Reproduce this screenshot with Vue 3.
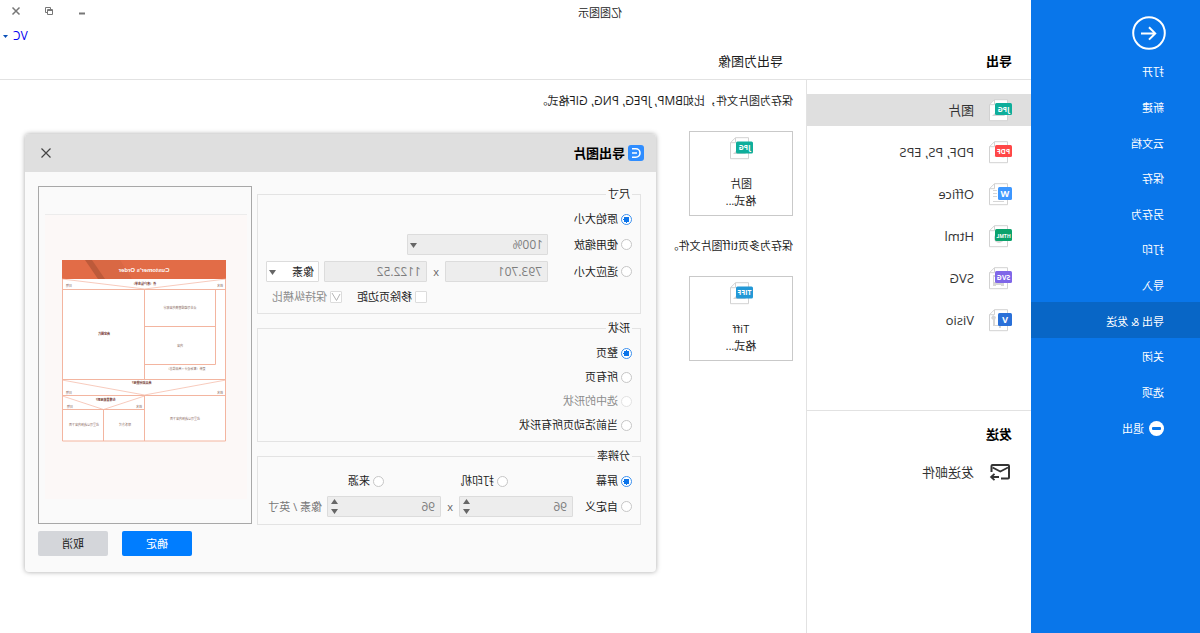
<script setup>
import { ref } from 'vue'

const menu = ['打开', '新建', '云文档', '保存', '另存为', '打印', '导入', '导出 & 发送', '关闭', '选项']
const activeMenu = ref('导出 & 发送')

const formats = [
  { label: '图片', tag: 'JPG', color: '#0fae9b', art: 'photo' },
  { label: 'PDF, PS, EPS', tag: 'PDF', color: '#ff4747', art: 'swirl' },
  { label: 'Office', tag: 'W', color: '#3d97ff', art: 'lines' },
  { label: 'Html', tag: 'HTML', color: '#0ba26c', art: 'globe' },
  { label: 'SVG', tag: 'SVG', color: '#7f67e8', art: 'nodes' },
  { label: 'Visio', tag: 'V', color: '#2a70d8', art: 'flow' }
]
const activeFormat = ref('图片')

const targets = [
  { lead: '保存为图片文件，比如', types: 'BMP, JPEG, PNG, GIF', tail: '格式。', name: '图片', tag: 'JPG', color: '#0fae9b', art: 'photo' },
  { lead: '保存为多页', types: 'tiff', tail: '图片文件。', name: 'Tiff', tag: 'TIFF', color: '#2398d6', art: 'photo' }
]

const artPaths = {
  photo: 'M7 17l4-5 3 3 2-2 4 4z',
  swirl: 'M7 17q5-2 6-7 1 5 7 5-7 0-13 2z',
  lines: 'M15 7h4v1h-4zM15 10h4v1h-4zM15 13h4v1h-4zM8 18h11v1H8z',
  globe: 'M13 8a5 5 0 1 1 0 10 5 5 0 0 1 0-10z',
  nodes: 'M8 15h3v1h5v-1h3v4h-3v-1h-5v1H8zM17 8h2v7h-1V10h-1z',
  flow: 'M16 8l3-2 2 3-2 2v6h-6v2h-2v-4h2v1h4v-5z'
}

const sizeMode = ref('original')
const shapes = [
  { value: 'page', label: '整页' },
  { value: 'all', label: '所有页' },
  { value: 'selected', label: '选中的形状', disabled: true },
  { value: 'active', label: '当前活动页所有形状' }
]
const shapeMode = ref('page')
const sources = [
  { value: 'screen', label: '屏幕' },
  { value: 'printer', label: '打印机' },
  { value: 'source', label: '来源' }
]
const dpiMode = ref('screen')
</script>

<template>
  <div class="window">
    <aside class="sidebar">
      <button class="back" aria-label="返回">
        <svg width="34" height="34" viewBox="0 0 34 34" fill="none" stroke="#fff">
          <circle cx="17" cy="17" r="15.8" stroke-width="2" />
          <path d="M25 17.4H11M17 11.2l-6.2 6.2 6.2 6.2" stroke-width="2" />
        </svg>
      </button>
      <nav class="menu">
        <button
          v-for="item in menu"
          :key="item"
          class="menu-item"
          :class="{ active: item === activeMenu }"
          @click="activeMenu = item"
        >{{ item }}</button>
        <button class="menu-item exit">
          <svg width="15" height="15" viewBox="0 0 15 15">
            <circle cx="7.5" cy="7.5" r="7.5" fill="#fff" />
            <rect x="3" y="6" width="9" height="3" rx="1" fill="#0976ea" />
          </svg>
          退出
        </button>
      </nav>
    </aside>

    <div class="workspace">
      <header class="top">
        <div class="titlebar">
          <span class="app-title">亿图图示</span>
          <div class="controls">
            <button aria-label="最小化">
              <svg width="10" height="10" viewBox="0 0 10 10"><path d="M2 7.5h6" stroke="#777" stroke-width="2" /></svg>
            </button>
            <button aria-label="还原">
              <svg width="10" height="10" viewBox="0 0 10 10" fill="none" stroke="#777">
                <path d="M7 6.500h1.500v-5h-5V3M1.500 3.500h5v5h-5zM1.500 4.500h5" />
              </svg>
            </button>
            <button aria-label="关闭窗口">
              <svg width="10" height="10" viewBox="0 0 10 10"><path d="M1.500 1.500l7 7M8.500 1.500l-7 7" stroke="#777" stroke-width="1.500" /></svg>
            </button>
          </div>
        </div>
        <div class="account">
          <a href="#">VC</a>
          <svg width="5" height="3" viewBox="0 0 5 3"><path d="M0 0h5L2.500 3z" fill="#0a50b8" /></svg>
        </div>
        <div class="headings">
          <h1>导出</h1>
          <h2>导出为图像</h2>
        </div>
      </header>

      <div class="body">
        <div class="side">
          <ul class="formats">
            <li v-for="f in formats" :key="f.label">
              <button class="row" :class="{ active: f.label === activeFormat }" @click="activeFormat = f.label">
                <svg class="file" width="24" height="23" viewBox="0 0 24 23">
                  <path d="M4.500.7h13l5 5v16h-18z" fill="#fff" stroke="#d2d2d2" />
                  <path d="M17.500.7v5h5" fill="none" stroke="#d2d2d2" />
                  <path :d="artPaths[f.art]" fill="#d6d6d6" />
                  <rect y="4" :width="f.tag.length > 1 ? 17 : 14" :height="f.tag.length > 1 ? 12 : 13" rx="1.500" :fill="f.color" />
                  <text v-if="f.tag.length > 1" class="tag" :class="{ long: f.tag.length > 3 }" x="8.500" y="12.500">{{ f.tag }}</text>
                  <text v-else class="tag big" x="7" y="14">{{ f.tag }}</text>
                </svg>
                {{ f.label }}
              </button>
            </li>
          </ul>
          <div class="send">
            <h3>发送</h3>
            <button class="row">
              <svg class="file" width="24" height="18" viewBox="0 0 24 18" fill="none" stroke="#333" stroke-width="2">
                <path d="M11 15.500H4q-1 0-1-1V3q0-1 1-1h15.500q1 0 1 1v6" />
                <path d="M4 4.500l7.700 4 7.700-4" stroke-width="1.800" />
                <path d="M13 14h7.500M17.500 10.800l3.400 3.200-3.400 3.200" stroke-width="1.800" />
              </svg>
              发送邮件
            </button>
          </div>
        </div>

        <main class="pane">
          <template v-for="t in targets" :key="t.name">
            <p>{{ t.lead }}<span class="types">{{ t.types }}</span>{{ t.tail }}</p>
            <button class="tile">
              <svg width="24" height="23" viewBox="0 0 24 23">
                <path d="M4.500.7h13l5 5v16h-18z" fill="#fff" stroke="#d2d2d2" />
                <path d="M17.500.7v5h5" fill="none" stroke="#d2d2d2" />
                <path :d="artPaths[t.art]" fill="#d6d6d6" />
                <rect y="4.500" width="17" height="12" rx="1.500" :fill="t.color" />
                <text class="tag" x="8.500" y="13">{{ t.tag }}</text>
              </svg>
              <span>{{ t.name }}<br>格式...</span>
            </button>
          </template>
        </main>
      </div>
    </div>

    <section class="dialog" role="dialog" aria-labelledby="dialog-title">
      <header class="dialog-head">
        <svg width="16" height="16" viewBox="0 0 16 16">
          <rect width="16" height="16" rx="3" fill="#2f8dff" />
          <path d="M12 3.800H8.200a4.200 4.200 0 0 0 0 8.400H12M7 8h5" fill="none" stroke="#fff" stroke-width="1.600" />
        </svg>
        <h2 id="dialog-title">导出图片</h2>
        <button class="close" aria-label="关闭">
          <svg width="12" height="12" viewBox="0 0 12 12"><path d="M1.500 1.500l9 9M10.500 1.500l-9 9" stroke="#444" stroke-width="1.200" /></svg>
        </button>
      </header>

      <div class="dialog-body">
        <div class="groups">
          <fieldset>
            <legend>尺寸</legend>
            <div class="size-grid">
              <label class="opt short"><input v-model="sizeMode" type="radio" name="size" value="original">原始大小</label>
              <label class="opt start"><input v-model="sizeMode" type="radio" name="size" value="scale">使用缩放</label>
              <div class="combo zoom">
                <select disabled aria-label="缩放比例"><option>100%</option></select>
                <svg width="7" height="5" viewBox="0 0 7 5"><path d="M0 0h7L3.500 5z" fill="#666" /></svg>
              </div>
              <label class="opt start"><input v-model="sizeMode" type="radio" name="size" value="fit">适应大小</label>
              <input class="field" disabled value="793.701" aria-label="宽度">
              <span class="by">x</span>
              <input class="field" disabled value="1122.52" aria-label="高度">
              <div class="combo unit">
                <select aria-label="单位"><option>像素</option></select>
                <svg width="7" height="5" viewBox="0 0 7 5"><path d="M0 0h7L3.500 5z" fill="#666" /></svg>
              </div>
              <div class="checks">
                <label class="opt"><input type="checkbox">移除页边距</label>
                <label class="opt off">
                  <span class="tick">
                    <input type="checkbox" checked disabled>
                    <svg width="12" height="12" viewBox="0 0 12 12"><path d="M2 3l3.500 6.500L10 2" fill="none" stroke="#b4b4b4" /></svg>
                  </span>保持纵横比
                </label>
              </div>
            </div>
          </fieldset>

          <fieldset>
            <legend>形状</legend>
            <div class="stack">
              <label v-for="s in shapes" :key="s.value" class="opt" :class="{ off: s.disabled }">
                <input v-model="shapeMode" type="radio" name="shape" :value="s.value" :disabled="s.disabled">{{ s.label }}
              </label>
            </div>
          </fieldset>

          <fieldset>
            <legend>分辨率</legend>
            <div class="stack">
              <div class="thirds">
                <label v-for="s in sources" :key="s.value" class="opt">
                  <input v-model="dpiMode" type="radio" name="dpi" :value="s.value">{{ s.label }}
                </label>
              </div>
              <div class="custom">
                <label class="opt"><input v-model="dpiMode" type="radio" name="dpi" value="custom">自定义</label>
                <div class="spin">
                  <input class="field" disabled value="96" aria-label="水平分辨率">
                  <svg width="7" height="15" viewBox="0 0 7 15"><path d="M0 5h7L3.500 0zM0 10h7L3.500 15z" fill="#666" /></svg>
                </div>
                <span class="by">x</span>
                <div class="spin">
                  <input class="field" disabled value="96" aria-label="垂直分辨率">
                  <svg width="7" height="15" viewBox="0 0 7 15"><path d="M0 5h7L3.500 0zM0 10h7L3.500 15z" fill="#666" /></svg>
                </div>
                <span class="units">像素 / 英寸</span>
              </div>
            </div>
          </fieldset>
        </div>

        <div class="right">
          <svg class="preview" viewBox="0 0 212 336" role="img" aria-label="预览">
            <rect x="4" y="27" width="202" height="285" fill="#fcf8f7" />
            <path d="M4 27.500h202" stroke="#ececec" />
            <rect x="25" y="92" width="164" height="162" fill="#fff" />
            <rect x="25" y="73" width="164" height="19" fill="#e26c47" />
            <path d="M131 73h28l-12 19h-28z" fill="#d96844" />
            <path d="M159 73h7l-13 19h-7z" fill="#bd5a3a" />
            <g fill="none" stroke="#f3b5a0">
              <path d="M25.500 92v162h163V92M25 102.500h164M35.500 102.500v75h71M35.500 139.500h71M106.500 102v90M25 192.500h164M25 208.500h164M106.500 208v46M106.500 222.500h82M147.500 222v32" />
              <path d="M25 92l81.500 10L189 92M25 193l81.500 15L189 193M106.500 209l41 13.500 41-13.500" stroke-width=".7" />
            </g>
            <text class="doc-title" x="107" y="85">Customer's Order</text>
            <g class="doc dark">
              <text x="107" y="98">件（客户信息单）</text>
              <text x="110" y="197">商品如何使用？</text>
              <text x="146" y="214">在哪里能用到？</text>
              <text x="147" y="148">商家图片</text>
            </g>
            <g class="doc">
              <text x="71" y="122">点击可编辑替换内容部分</text>
              <text x="71" y="160">内容</text>
              <text x="65" y="183">更新（客源设计 + 商品信息）</text>
              <text x="66" y="233">这里可以选择内容下面</text>
              <text x="126" y="239">联系方式</text>
              <text x="167" y="239">这里可以选择内容下面</text>
              <text x="31" y="100">姓名</text>
              <text x="182" y="100">日期</text>
              <text x="31" y="207">姓名</text>
              <text x="182" y="207">日期</text>
              <text x="112" y="221">姓名</text>
              <text x="181" y="221">日期</text>
            </g>
          </svg>
          <div class="actions">
            <button class="primary">确定</button>
            <button>取消</button>
          </div>
        </div>
      </div>
    </section>
  </div>
</template>

<style>
body {
  margin: 0;
  background: #fff;
}
</style>

<style scoped>
* {
  box-sizing: border-box;
}
.window {
  position: relative;
  display: flex;
  min-height: 100vh;
  transform: scaleX(-1);
  background: #fff;
  color: #1c1c1c;
  font: 11px/18px "Open Sans", "Noto Sans CJK SC", sans-serif;
}
button,
input,
select {
  margin: 0;
  padding: 0;
  border: 0;
  background: none;
  color: inherit;
  font: inherit;
}
h1, h2, h3, p, ul {
  margin: 0;
  padding: 0;
  list-style: none;
}
svg {
  display: block;
  flex: none;
}

.sidebar {
  flex: none;
  width: 169px;
  padding-top: 16px;
  background: #0976ea;
  color: #fff;
}
.back {
  display: block;
  margin-left: 34px;
}
.menu {
  display: grid;
  grid-auto-rows: 1fr;
  height: 392px;
  margin-top: 3px;
}
.menu-item {
  display: flex;
  align-items: center;
  gap: 5px;
  width: 100%;
  padding: 3px 0 0 36px;
  text-align: left;
}
.menu-item.active {
  background: #0866c6;
}

.workspace {
  flex: 1;
  display: flex;
  flex-direction: column;
}
.top {
  border-bottom: 1px solid #e2e2e2;
}
.titlebar {
  display: flex;
  height: 26px;
}
.app-title {
  flex: 1;
  padding-top: 4px;
  text-align: center;
}
.controls {
  display: flex;
  justify-content: flex-end;
  width: 169px;
}
.controls button {
  display: grid;
  place-items: center;
  width: 33px;
  height: 21px;
}
.account {
  display: flex;
  align-items: center;
  justify-content: flex-end;
  gap: 5px;
  height: 20px;
  padding-right: 3px;
}
.account a {
  color: #0000f0;
  font-size: 12px;
  text-decoration: none;
}
.headings {
  display: grid;
  grid-template-columns: 229px 1fr;
  height: 33px;
  padding: 6px 0 0 19px;
}
.headings h1,
.send h3 {
  color: #000;
  font-size: 13px;
  font-weight: 700;
}
.headings h2 {
  font-size: 13px;
  font-weight: 400;
}

.body {
  flex: 1;
  display: grid;
  grid-template-columns: 225px 1fr;
}
.side {
  border-right: 1px solid #e2e2e2;
}
.formats {
  display: flex;
  flex-direction: column;
  gap: 10px;
  min-height: 331px;
  padding-top: 14px;
  border-bottom: 1px solid #e2e2e2;
}
.row {
  display: flex;
  align-items: center;
  gap: 14px;
  width: 100%;
  height: 32px;
  padding-left: 19px;
  color: #333;
  font-size: 13px;
  text-align: left;
}
.row.active {
  background: #dfdfdf;
}
.send {
  padding-top: 14px;
}
.send h3 {
  margin-bottom: 13px;
  padding-left: 19px;
}
.tag {
  fill: #fff;
  font: 700 7px "Open Sans", sans-serif;
  text-anchor: middle;
}
.tag.long {
  font-size: 5px;
}
.tag.big {
  font-size: 9px;
}

.pane {
  display: flex;
  flex-direction: column;
  align-items: flex-start;
  gap: 21px;
  padding: 12px 0 0 13px;
}
.types {
  font-size: 12px;
}
.tile {
  display: flex;
  flex-direction: column;
  align-items: center;
  gap: 15px;
  width: 104px;
  height: 85px;
  padding-top: 5px;
  border: 1px solid #c9c9c9;
  line-height: 17px;
}

.dialog {
  position: absolute;
  top: 134px;
  right: 25px;
  left: 544px;
  border-radius: 4px;
  background: #fafafa;
  box-shadow: 0 0 5px rgba(0, 0, 0, 0.35);
}
.dialog-head {
  display: flex;
  align-items: center;
  height: 38px;
  padding: 0 15px 0 12px;
  border-radius: 4px 4px 0 0;
  background: #dfdfdf;
}
.dialog-head h2 {
  flex: 1;
  margin-left: 3px;
  color: #000;
  font-size: 13px;
}
.dialog-body {
  display: flex;
  gap: 5px;
  padding: 14px 13px 16px 15px;
}
.groups {
  flex: 1;
  min-width: 0;
  display: flex;
  flex-direction: column;
  gap: 6px;
}
fieldset {
  min-width: 0;
  margin: 0;
  padding: 8px 8px 7px;
  border: 1px solid #e3e3e3;
}
legend {
  padding: 0 2px;
  line-height: 16px;
}
.size-grid {
  display: grid;
  grid-template-columns: 84px 103px 18px 103px 1fr;
  row-gap: 6px;
}
.short {
  grid-column: 1 / -1;
}
.start {
  grid-column: 1;
}
.zoom {
  grid-column: 2 / 5;
}
.unit {
  margin-left: 5px;
  background: #fff;
}
.checks {
  grid-column: 4 / -1;
  display: flex;
  justify-content: space-between;
}
.opt {
  display: flex;
  align-items: center;
  gap: 3px;
  min-height: 18px;
  white-space: nowrap;
}
.off {
  padding-right: 6px;
  color: #8c8c8c;
}
input[type="radio"],
input[type="checkbox"] {
  flex: none;
  appearance: none;
  width: 11px;
  height: 11px;
  border: 1px solid #c6c6c6;
  border-radius: 50%;
  background: #fff;
}
input[type="checkbox"] {
  width: 12px;
  height: 12px;
  border-color: #dcdcdc;
  border-radius: 1px;
}
input[type="radio"]:checked {
  border-color: #3c90ee;
  background: radial-gradient(circle, #0b74ea 2px, #0b74ea 3px, #fff 3px);
}
input[type="radio"]:disabled {
  border-color: #e2e2e2;
}
.tick {
  position: relative;
  display: flex;
}
.tick svg {
  position: absolute;
  inset: 0;
}
.field,
.combo {
  width: 100%;
  min-width: 0;
  height: 21px;
  border: 1px solid #dcdcdc;
  border-radius: 1px;
}
.field {
  padding-left: 5px;
  background: #ededed;
  color: #7d7d7d;
  font-size: 12px;
}
.combo {
  position: relative;
}
.combo.zoom {
  width: 141px;
  background: #ededed;
  color: #7d7d7d;
  font-size: 12px;
}
.combo.unit {
  width: auto;
}
.combo select {
  appearance: none;
  display: block;
  width: 100%;
  height: 100%;
  padding-left: 4px;
  opacity: 1;
}
.combo svg {
  position: absolute;
  top: 8px;
  right: 2px;
}
.by {
  color: #666;
  line-height: 21px;
  text-align: center;
}
.stack {
  display: flex;
  flex-direction: column;
  gap: 6px;
}
.thirds {
  display: grid;
  grid-template-columns: 124px 124px 1fr;
}
.custom {
  display: grid;
  grid-template-columns: 59px 114px 18px 114px 1fr;
}
.spin {
  position: relative;
}
.spin svg {
  position: absolute;
  top: 3px;
  right: 4px;
}
.units {
  padding-left: 5px;
  color: #777;
  line-height: 21px;
  white-space: nowrap;
}

.right {
  flex: none;
  width: 214px;
}
.preview {
  width: 100%;
  border: 1px solid #a8a8a8;
}
.doc-title {
  fill: #fff;
  font: 700 6px "Liberation Sans", sans-serif;
  text-anchor: middle;
}
.doc text {
  fill: #8a6a60;
  font: 3px "Noto Sans CJK SC", sans-serif;
  text-anchor: middle;
}
.doc.dark text {
  fill: #6b2a1c;
  font-weight: 700;
}
.actions {
  display: flex;
  justify-content: flex-end;
  gap: 14px;
  margin-top: 7px;
}
.actions button {
  width: 70px;
  height: 25px;
  border-radius: 2px;
  background: #d4d6da;
}
.actions .primary {
  background: #007dff;
  color: #fff;
}
</style>
